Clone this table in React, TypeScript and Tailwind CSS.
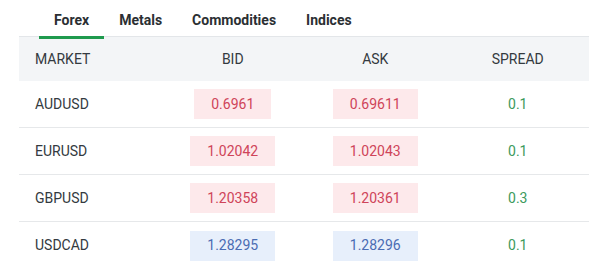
import React from "react";

type Row = { market: string; bid: string; ask: string; spread: string; dir: "down" | "up" };

const rows: Row[] = [
  { market: "AUDUSD", bid: "0.6961", ask: "0.69611", spread: "0.1", dir: "down" },
  { market: "EURUSD", bid: "1.02042", ask: "1.02043", spread: "0.1", dir: "down" },
  { market: "GBPUSD", bid: "1.20358", ask: "1.20361", spread: "0.3", dir: "down" },
  { market: "USDCAD", bid: "1.28295", ask: "1.28296", spread: "0.1", dir: "up" },
];

const tabs = ["Forex", "Metals", "Commodities", "Indices"];

function Price({ value, dir }: { value: string; dir: Row["dir"] }) {
  const tone =
    dir === "down" ? "bg-[#fde9eb] text-[#cf4459]" : "bg-[#e7effb] text-[#4a6cb3]";
  return (
    <span className={`inline-flex h-[30px] items-center justify-center px-[17px] ${tone}`}>
      {value}
    </span>
  );
}

export default function App() {
  return (
    <div className="h-[267px] w-[608px] bg-white font-['Roboto',sans-serif] text-[14px] text-[#333a40]">
      <div className="relative z-10 flex h-[39px] pl-[39px]">
        {tabs.map((tab, i) => (
          <div
            key={tab}
            className={`h-[39px] px-[15px] pt-[10px] text-[14px] leading-5 font-bold text-[#2b2f33] ${
              i === 0 ? "border-b-[3px] border-[#1f9a4e]" : ""
            }`}
          >
            {tab}
          </div>
        ))}
      </div>
      <div className="mx-[19px] -mt-[3px] border-t border-[#e3e6e9]">
        <div className="grid h-[44px] grid-cols-4 items-center bg-[#f3f5f7] uppercase">
          <div className="pl-4">Market</div>
          <div className="text-center">Bid</div>
          <div className="text-center">Ask</div>
          <div className="text-center">Spread</div>
        </div>
        {rows.map((r, i) => (
          <div
            key={r.market}
            className={`grid h-[47px] grid-cols-4 items-center ${
              i < rows.length - 1 ? "border-b border-[#e6e8ea]" : ""
            }`}
          >
            <div className="pl-4">{r.market}</div>
            <div className="text-center">
              <Price value={r.bid} dir={r.dir} />
            </div>
            <div className="text-center">
              <Price value={r.ask} dir={r.dir} />
            </div>
            <div className="text-center text-[#3c9a5c]">{r.spread}</div>
          </div>
        ))}
      </div>
    </div>
  );
}
